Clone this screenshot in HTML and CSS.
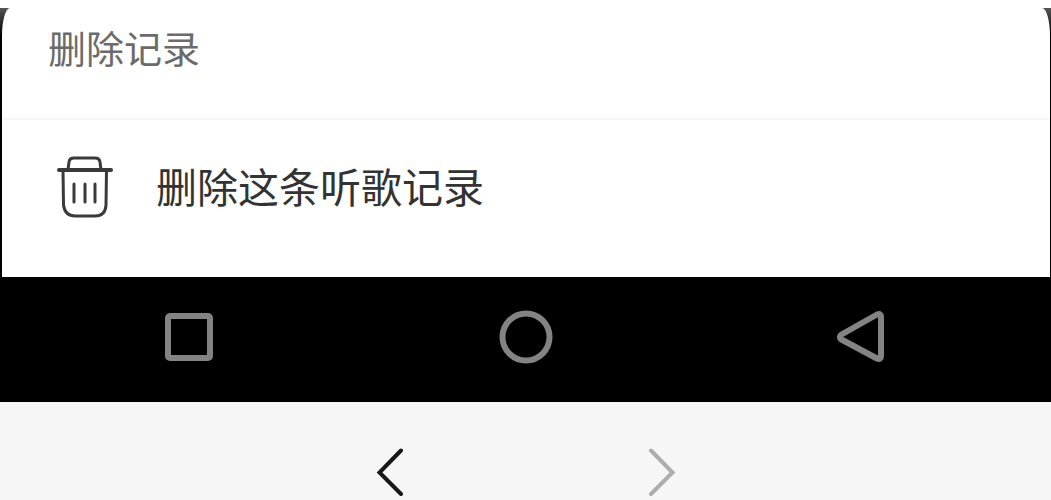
FILE: index.html
```html
<!DOCTYPE html>
<html lang="zh-CN">
<head>
    <meta charset="UTF-8">
    <meta name="viewport" content="width=device-width, initial-scale=1.0">
    <title>删除记录</title>
    <link rel="stylesheet" href="styles.css">
</head>

<body>
    <main class="phone">
        <section class="sheet">
            <h1 class="sheet_title">删除记录</h1>
            <button class="sheet_item" type="button">
                <svg class="icon_trash" viewBox="0 0 56 62" aria-hidden="true">
                    <path d="M11 13.500L12 6Q12.500 2 17 2H38Q42.500 2 43 6L44 13.500"/>
                    <path d="M6 14L6.500 49Q8 60 18 60H38Q48.500 60 49 49L49.500 14"/>
                    <path class="lid" d="M2 14H54"/>
                    <path d="M17 28V46M28 28V46M38 28V46"/>
                </svg>
                <span class="sheet_text">删除这条听歌记录</span>
            </button>
        </section>
        <nav class="keys">
            <button type="button" aria-label="最近任务">
                <svg viewBox="0 0 54 54"><rect x="6" y="6" width="42" height="42" rx="2"/></svg>
            </button>
            <button type="button" aria-label="主屏幕">
                <svg viewBox="0 0 54 54"><circle cx="27" cy="27" r="23.500"/></svg>
            </button>
            <button type="button" aria-label="返回">
                <svg viewBox="0 0 54 54"><path d="M5.500 24.500L41 4.500Q45 3 45 7V46Q45 50 41 48.500L5.500 29.500Q2 27 5.500 24.500Z"/></svg>
            </button>
        </nav>
    </main>
    <footer class="pager">
        <button type="button" aria-label="后退">
            <svg viewBox="0 0 28 48"><path d="M25 2.500L3.500 24.500L25 46"/></svg>
        </button>
        <button class="off" type="button" aria-label="前进">
            <svg viewBox="0 0 28 48"><path d="M3 2.500L24.500 24.500L3 46"/></svg>
        </button>
    </footer>
</body>
</html>
```
FILE: styles.css
```css
* {
    box-sizing: border-box;
}

body {
    display: flex;
    flex-direction: column;
    min-height: 100vh;
    margin: 0;
    padding-top: 8px;
    background-color: #fff;
    font-family: "Noto Sans CJK SC", sans-serif;
}

button {
    padding: 0;
    border: 0;
    background: none;
    font: inherit;
    cursor: pointer;
}

svg {
    display: block;
    fill: none;
}

.phone {
    background: linear-gradient(#555, #000 28px);
}

/* 底部弹层 */
.sheet {
    margin: 0 1px 0 2px;
    padding-bottom: 23px;
    background-color: #fff;
    border-radius: 8px 8px 0 0 / 28px 28px 0 0;
}

.sheet_title {
    height: 112px;
    margin: 0;
    padding: 11px 46px 0;
    border-bottom: 2px solid #f6f6f6;
    color: #6b6b6b;
    font-size: 38px;
    font-weight: 400;
    line-height: 56px;
}

.sheet_item {
    display: flex;
    align-items: center;
    gap: 43px;
    width: 100%;
    height: 134px;
    padding: 0 55px;
    color: #333;
    font-size: 41px;
    line-height: 60px;
    text-align: left;
}

.sheet_text {
    padding-bottom: 4px;
}

.icon_trash {
    width: 56px;
    height: 62px;
    stroke: #3a3a3a;
    stroke-width: 3;
    stroke-linecap: round;
}

.icon_trash .lid {
    stroke-width: 4;
}

/* 系统导航键 */
.keys {
    display: grid;
    grid-template-columns: repeat(3, 1fr);
    align-items: center;
    justify-items: center;
    height: 125px;
    padding: 0 20px 6px;
}

.keys svg {
    width: 54px;
    height: 54px;
    stroke: #838383;
    stroke-width: 6;
    stroke-linejoin: round;
}

/* 前进后退 */
.pager {
    display: flex;
    flex: 1;
    align-items: flex-start;
    justify-content: center;
    gap: 244px;
    padding-top: 46px;
    background-color: #f6f6f6;
}

.pager svg {
    width: 28px;
    height: 48px;
    stroke: #181818;
    stroke-width: 4;
    stroke-linecap: round;
}

.pager .off svg {
    stroke: #adadad;
}
```
